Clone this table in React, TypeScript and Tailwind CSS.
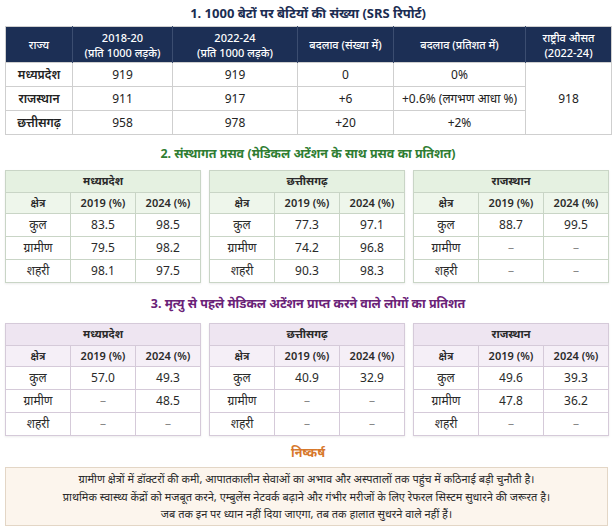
import React from 'react';

type Row = [string, string, string];

interface SmallTable {
  state: string;
  rows: Row[];
}

const births: SmallTable[] = [
  { state: 'मध्यप्रदेश', rows: [['कुल', '83.5', '98.5'], ['ग्रामीण', '79.5', '98.2'], ['शहरी', '98.1', '97.5']] },
  { state: 'छत्तीसगढ़', rows: [['कुल', '77.3', '97.1'], ['ग्रामीण', '74.2', '96.8'], ['शहरी', '90.3', '98.3']] },
  { state: 'राजस्थान', rows: [['कुल', '88.7', '99.5'], ['ग्रामीण', '–', '–'], ['शहरी', '–', '–']] },
];

const deaths: SmallTable[] = [
  { state: 'मध्यप्रदेश', rows: [['कुल', '57.0', '49.3'], ['ग्रामीण', '–', '48.5'], ['शहरी', '–', '–']] },
  { state: 'छत्तीसगढ़', rows: [['कुल', '40.9', '32.9'], ['ग्रामीण', '–', '–'], ['शहरी', '–', '–']] },
  { state: 'राजस्थान', rows: [['कुल', '49.6', '39.3'], ['ग्रामीण', '47.8', '36.2'], ['शहरी', '–', '–']] },
];

const ratio = [
  ['मध्यप्रदेश', '919', '919', '0', '0%'],
  ['राजस्थान', '911', '917', '+6', '+0.6% (लगभण आधा %)'],
  ['छत्तीसगढ़', '958', '978', '+20', '+2%'],
];

function StateTable({ data, tone }: { data: SmallTable; tone: 'green' | 'purple' }) {
  const green = tone === 'green';
  const border = green ? 'border-[#c9d5c6]' : 'border-[#d5cad9]';
  const titleBg = green ? 'bg-[#e5f1e1]' : 'bg-[#eee5f1]';
  const headBg = green ? 'bg-[#eef6eb]' : 'bg-[#f5eff7]';
  const cell = `border ${border} text-center`;
  return (
    <table className={`w-[196px] border-collapse table-fixed border ${border} shadow-[0_1px_2px_rgba(0,0,0,0.08)]`}>
      <tbody>
        <tr className={`h-[22px] ${titleBg}`}>
          <td colSpan={3} className={`${cell} text-[11px] font-bold text-[#2a2a2a]`}>{data.state}</td>
        </tr>
        <tr className={`h-[21px] ${headBg}`}>
          <td className={`${cell} text-[11px] font-semibold text-[#2a2a2a]`}>क्षेत्र</td>
          <td className={`${cell} text-[11px] font-semibold text-[#2a2a2a]`}>2019 (%)</td>
          <td className={`${cell} text-[11px] font-semibold text-[#2a2a2a]`}>2024 (%)</td>
        </tr>
        {data.rows.map((r) => (
          <tr key={r[0]} className="h-[23px] bg-white">
            <td className={`${cell} text-[12px] text-[#2a2a2a]`}>{r[0]}</td>
            <td className={`${cell} text-[12px] ${r[1] === '–' ? 'text-[#888]' : 'text-[#2a2a2a]'}`}>{r[1]}</td>
            <td className={`${cell} text-[12px] ${r[2] === '–' ? 'text-[#888]' : 'text-[#2a2a2a]'}`}>{r[2]}</td>
          </tr>
        ))}
      </tbody>
    </table>
  );
}

export default function App() {
  const th = 'border-r border-[#3b4d70] last:border-r-0 text-white text-[11px] font-medium leading-[15px] text-center';
  const td = 'border border-[#cfcfcf] text-center text-[12px] text-[#222]';
  return (
    <div
      className="w-[616px] h-[532px] bg-white px-[5px] pt-[4px] overflow-hidden"
      style={{ fontFamily: '"Noto Sans", "Noto Sans Devanagari", "Open Sans", sans-serif' }}
    >
      {/* 1. ratio */}
      <h1 className="text-center text-[13px] font-bold text-[#1b2d52] leading-[18px]">
        1. 1000 बेटों पर बेटियों की संख्या (SRS रिपोर्ट)
      </h1>
      <table className="mt-[4px] w-[606px] border-collapse table-fixed border border-[#cfcfcf]">
        <colgroup>
          <col className="w-[67px]" />
          <col className="w-[100px]" />
          <col className="w-[125px]" />
          <col className="w-[96px]" />
          <col className="w-[132px]" />
          <col className="w-[86px]" />
        </colgroup>
        <thead>
          <tr className="h-[36px] bg-[#1c2f55]">
            <th className={th}>राज्य</th>
            <th className={th}>2018-20<br />(प्रति 1000 लड़के)</th>
            <th className={th}>2022-24<br />(प्रति 1000 लड़के)</th>
            <th className={th}>बदलाव (संख्या में)</th>
            <th className={th}>बदलाव (प्रतिशत में)</th>
            <th className={th}>राष्ट्रीव औसत<br />(2022-24)</th>
          </tr>
        </thead>
        <tbody>
          {ratio.map((r, i) => (
            <tr key={r[0]} className="h-[24px]">
              <td className={`${td} font-semibold`}>{r[0]}</td>
              <td className={td}>{r[1]}</td>
              <td className={td}>{r[2]}</td>
              <td className={td}>{r[3]}</td>
              <td className={td}>{r[4]}</td>
              {i === 0 && (
                <td rowSpan={3} className={td}>918</td>
              )}
            </tr>
          ))}
        </tbody>
      </table>

      {/* 2. institutional births */}
      <h2 className="mt-[10px] text-center text-[12.5px] font-bold text-[#2f7d32] leading-[18px]">
        2. संस्थागत प्रसव (मेडिकल अटेंशन के साथ प्रसव का प्रतिशत)
      </h2>
      <div className="mt-[7px] flex justify-between pr-[2px]">
        {births.map((t) => (
          <StateTable key={t.state} data={t} tone="green" />
        ))}
      </div>

      {/* 3. medical attention before death */}
      <h2 className="mt-[12px] text-center text-[12.5px] font-bold text-[#6a2277] leading-[18px]">
        3. मृत्यु से पहले मेडिकल अटेंशन प्राप्त करने वाले लोगों का प्रतिशत
      </h2>
      <div className="mt-[10px] flex justify-between pr-[2px]">
        {deaths.map((t) => (
          <StateTable key={t.state} data={t} tone="purple" />
        ))}
      </div>

      {/* conclusion */}
      <h3 className="mt-[8px] text-center text-[12.5px] font-bold text-[#d7782c] leading-[18px]">निष्कर्ष</h3>
      <div className="mt-[5px] mr-[3px] border border-[#e3d6c6] bg-[#fcf5ed] py-[2px] text-center text-[11px] leading-[17.5px] text-[#2a2a2a]">
        <p>ग्रामीण क्षेत्रों में डॉक्टरों की कमी, आपातकालीन सेवाओं का अभाव और अस्पतालों तक पहुंच में कठिनाई बड़ी चुनौती है।</p>
        <p>प्राथमिक स्वास्थ्य केंद्रों को मजबूत करने, एम्बुलेंस नेटवर्क बढ़ाने और गंभीर मरीजों के लिए रेफरल सिस्टम सुधारने की जरूरत है।</p>
        <p>जब तक इन पर ध्यान नहीं दिया जाएगा, तब तक हालात सुधरने वाले नहीं हैं।</p>
      </div>
    </div>
  );
}
